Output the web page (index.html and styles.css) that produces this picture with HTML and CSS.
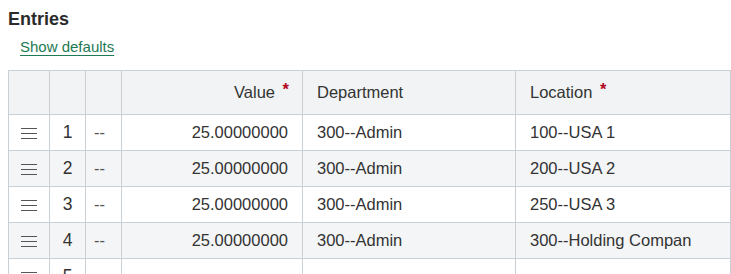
FILE: index.html
```html
<!DOCTYPE html>
<html>
<head>
<meta charset="utf-8">
<link rel="stylesheet" href="styles.css">
</head>
<body>
<h2 class="title">Entries</h2>
<div class="links"><a class="link" href="#">Show defaults</a></div>
<div class="table-wrap">
<table class="grid">
  <colgroup>
    <col class="c-drag"><col class="c-num"><col class="c-dash"><col class="c-value"><col class="c-dept"><col class="c-loc">
  </colgroup>
  <thead>
    <tr>
      <th></th><th></th><th></th>
      <th class="right">Value <span class="req">*</span></th>
      <th>Department</th>
      <th>Location <span class="req">*</span></th>
    </tr>
  </thead>
  <tbody>
    <tr>
      <td class="drag"><span class="burger"><i></i><i></i><i></i></span></td><td class="num">1</td><td class="dash">--</td>
      <td class="right">25.00000000</td><td>300--Admin</td><td>100--USA 1</td>
    </tr>
    <tr class="alt">
      <td class="drag"><span class="burger"><i></i><i></i><i></i></span></td><td class="num">2</td><td class="dash">--</td>
      <td class="right">25.00000000</td><td>300--Admin</td><td>200--USA 2</td>
    </tr>
    <tr>
      <td class="drag"><span class="burger"><i></i><i></i><i></i></span></td><td class="num">3</td><td class="dash">--</td>
      <td class="right">25.00000000</td><td>300--Admin</td><td>250--USA 3</td>
    </tr>
    <tr class="alt">
      <td class="drag"><span class="burger"><i></i><i></i><i></i></span></td><td class="num">4</td><td class="dash">--</td>
      <td class="right">25.00000000</td><td>300--Admin</td><td>300--Holding Compan</td>
    </tr>
    <tr>
      <td class="drag"><span class="burger"><i></i><i></i><i></i></span></td><td class="num">5</td><td class="dash"></td>
      <td class="right"></td><td></td><td></td>
    </tr>
  </tbody>
</table>
</div>
</body>
</html>
```
FILE: styles.css
```css
html {
  background: #ffffff;
  overflow: hidden;
}
body {
  margin: 8px 0 8px 8px;
  font-family: "Liberation Sans", Arial, sans-serif;
  color: #333333;
}
.title {
  margin: 0;
  padding-top: 1px;
  font-size: 18px;
  line-height: 20px;
  font-weight: bold;
  color: #2b2b2b;
}
.links {
  margin-top: 8px;
  padding-left: 12px;
  line-height: 20px;
}
.link {
  font-size: 15px;
  color: #1e7a52;
  text-decoration: underline;
  text-underline-offset: 3px;
}
.table-wrap {
  margin-top: 13px;
}
.grid {
  border-collapse: collapse;
  table-layout: fixed;
  width: 100%;
  font-size: 16.5px;
}
.c-drag { width: 41px; }
.c-num { width: 36px; }
.c-dash { width: 36px; }
.c-value { width: 181px; }
.c-dept { width: 213px; }
.grid th, .grid td {
  border: 1px solid #c9d0d5;
  padding: 0 14px;
  text-align: left;
  white-space: nowrap;
  overflow: hidden;
}
.grid th {
  height: 43px;
  background: #f1f3f4;
  font-weight: normal;
  color: #333;
}
.grid td {
  height: 35px;
}
.grid tr.alt td {
  background: #f3f5f6;
}
.grid .right {
  text-align: right;
}
.grid th.right {
  padding-right: 13px;
}
.req {
  color: #b3071b;
  font-weight: bold;
  position: relative;
  top: -3px;
  margin-left: 3px;
}
.grid td.num {
  text-align: center;
  padding: 0;
  font-size: 17.5px;
}
.grid td.dash {
  padding: 0 8px;
  color: #555;
}
.grid td.drag {
  padding: 0;
  text-align: center;
}
.burger {
  display: inline-flex;
  flex-direction: column;
  gap: 4px;
  vertical-align: middle;
}
.burger i {
  display: block;
  width: 16px;
  height: 1px;
  background: #555;
}
```
